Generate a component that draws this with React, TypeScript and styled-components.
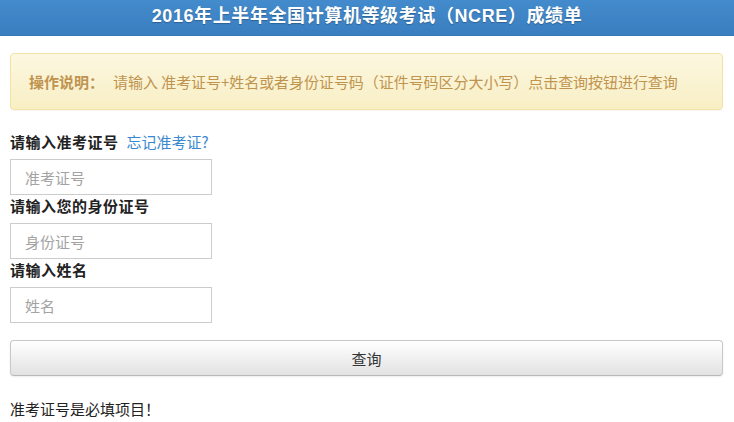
import React from "react";
import styled, { createGlobalStyle } from "styled-components";

const Global = createGlobalStyle`
  html, body { margin: 0; padding: 0; background: #fff; }
  body { font-family: "Noto Sans CJK SC", "Liberation Sans", sans-serif; color: #333; }
  * { box-sizing: border-box; }
`;

const Header = styled.header`
  height: 36px;
  background: linear-gradient(to bottom, #438bcc, #3a7ec0);
  border-bottom: 1px solid #3577b6;
  color: #fff;
  font-family: "Liberation Sans", "Noto Sans CJK SC", sans-serif;
  font-weight: bold;
  font-size: 18px;
  letter-spacing: 0.6px;
  line-height: 32px;
  text-align: center;
  text-shadow: 0 1px 1px rgba(0, 0, 0, 0.25);
`;

const Main = styled.main`
  padding: 0 11px 0 10px;
`;

const Alert = styled.div`
  margin: 17px 0 22px;
  height: 57px;
  display: flex;
  align-items: center;
  padding: 0 18px;
  border: 1px solid #f3e3a1;
  border-radius: 4px;
  background: linear-gradient(to bottom, #fcf7e1, #f8efc4);
  color: #c0934f;
  font-size: 15px;
  letter-spacing: -0.05px;
  box-shadow: 0 1px 1px rgba(0, 0, 0, 0.04);
`;

const AlertTitle = styled.strong`
  letter-spacing: 0;
  margin-right: 9px;
`;

const Label = styled.label`
  display: block;
  margin: 1px 0 7px;
  font-size: 15px;
  font-weight: bold;
  letter-spacing: 0.5px;
  line-height: 20px;
  color: #222;
`;

const Link = styled.a`
  font-weight: normal;
  letter-spacing: 0;
  color: #3a89cf;
  text-decoration: none;
  margin-left: 8px;
`;

const Input = styled.input`
  display: block;
  width: 202px;
  height: 36px;
  border: 1px solid #ccc;
  padding: 0 14px;
  font-family: inherit;
  font-size: 15px;
  color: #333;
  outline: none;
  &::placeholder { color: #a3a3a3; }
`;

const Button = styled.button`
  display: block;
  width: 100%;
  height: 36px;
  margin-top: 17px;
  border: 1px solid #c8c8c8;
  border-bottom-color: #b8b8b8;
  border-radius: 4px;
  background: linear-gradient(to bottom, #ffffff, #e2e2e2);
  box-shadow: 0 1px 2px rgba(0, 0, 0, 0.08);
  font-family: inherit;
  font-size: 15px;
  color: #333;
`;

const ErrorText = styled.p`
  margin: 23px 0 0;
  font-size: 15px;
  line-height: 20px;
  color: #222;
`;

export default function App() {
  return (
    <>
      <Global />
      <Header>2016年上半年全国计算机等级考试（NCRE）成绩单</Header>
      <Main>
        <Alert>
          <AlertTitle>操作说明：</AlertTitle>
          请输入 准考证号+姓名或者身份证号码（证件号码区分大小写）点击查询按钮进行查询
        </Alert>
        <Label>
          请输入准考证号<Link href="#">忘记准考证?</Link>
        </Label>
        <Input placeholder="准考证号" />
        <Label>请输入您的身份证号</Label>
        <Input placeholder="身份证号" />
        <Label>请输入姓名</Label>
        <Input placeholder="姓名" />
        <Button>查询</Button>
        <ErrorText>准考证号是必填项目！</ErrorText>
      </Main>
    </>
  );
}
